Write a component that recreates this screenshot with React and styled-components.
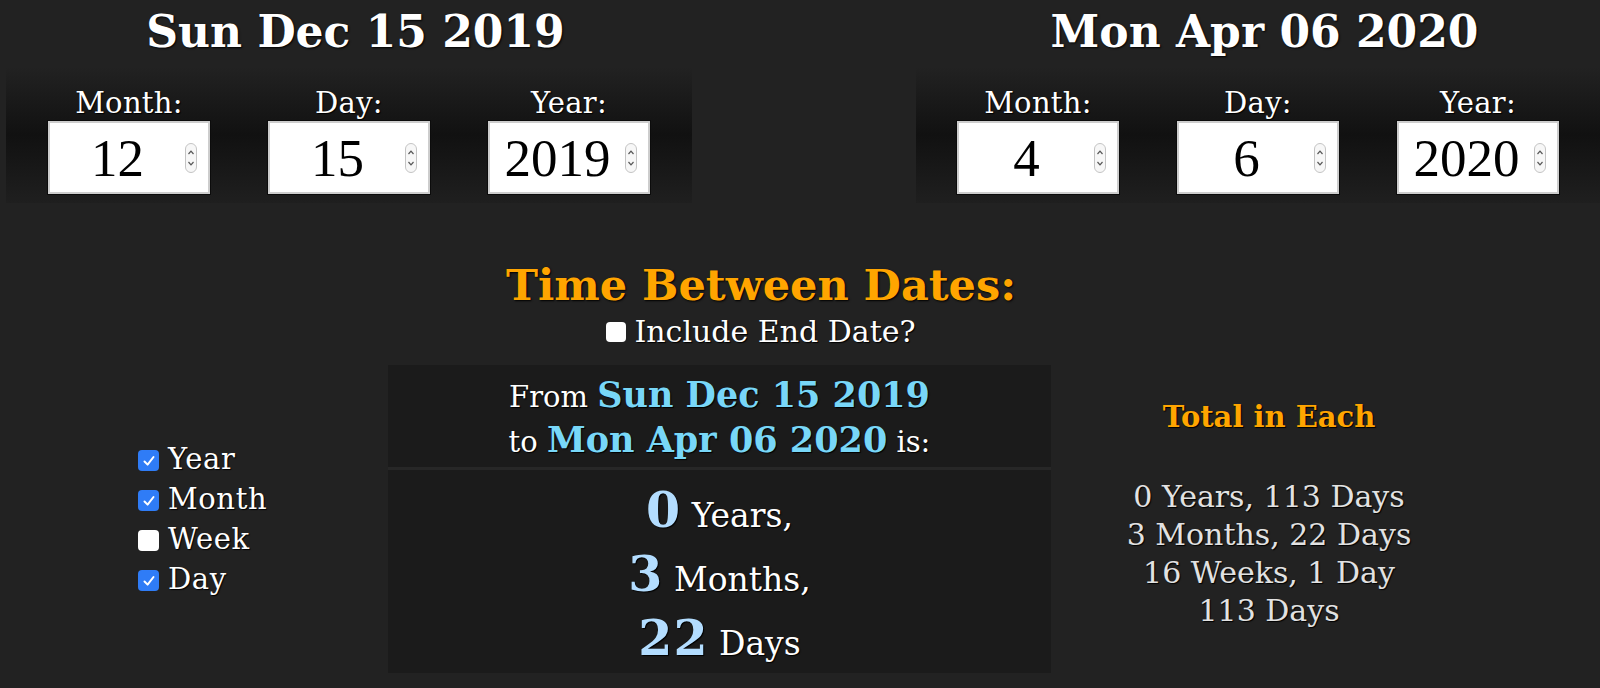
import React from 'react';
import styled, { createGlobalStyle } from 'styled-components';

const GlobalStyle = createGlobalStyle`
  html, body { margin: 0; padding: 0; background: #222; }
  body {
    font-family: "DejaVu Serif", "Liberation Serif", serif;
    color: #fff;
    width: 1600px;
    height: 688px;
    overflow: hidden;
  }
`;

const Page = styled.div`
  width: 1600px;
`;

const TopRow = styled.div`
  display: flex;
  justify-content: space-between;
  padding-left: 6px;
`;

const DateBlock = styled.section`
  width: ${(p) => p.$w}px;
  display: flex;
  flex-direction: column;
`;

const DateHeading = styled.h1`
  margin: 6px 0 9px;
  padding-left: 13px;
  font-size: 44px;
  line-height: 52px;
  font-weight: bold;
  text-align: center;
  text-shadow: 1px 1px 2px #000;
`;

const Panel = styled.div`
  height: 136px;
  box-sizing: border-box;
  padding-top: 21px;
  display: flex;
  justify-content: center;
  gap: 58px;
  background: linear-gradient(#222 0%, #111 50%, #1f1f1f 100%);
`;

const Field = styled.div`
  display: flex;
  flex-direction: column;
  align-items: center;
`;

const FieldLabel = styled.label`
  font-size: 29px;
  line-height: 30px;
  margin-bottom: 3px;
  letter-spacing: 0.3px;
  text-shadow: 1px 1px 1px #000;
`;

const NumberBox = styled.div`
  width: 162px;
  height: 73px;
  box-sizing: border-box;
  border: 2px solid #cdcdcd;
  box-shadow: 0 0 0 1px #0c0c0c;
  background: #fff;
  display: flex;
  align-items: center;
`;

const NumberInput = styled.input`
  flex: 1;
  min-width: 0;
  height: 100%;
  border: none;
  outline: none;
  background: transparent;
  padding: 0;
  font-family: "Liberation Serif", serif;
  font-size: 53px;
  color: #000;
  text-align: center;
`;

const SpinSvg = styled.svg`
  flex: none;
  margin-right: 11px;
`;

const Spinner = () => (
  <SpinSvg width="12" height="30" viewBox="0 0 12 30">
    <rect x="0.5" y="0.5" width="11" height="29" rx="5.5" fill="#f7f7f7" stroke="#c4c4c4" />
    <path d="M3.5 11 L6 8.2 L8.5 11" fill="none" stroke="#555" strokeWidth="1.2" />
    <path d="M3.5 19 L6 21.8 L8.5 19" fill="none" stroke="#555" strokeWidth="1.2" />
  </SpinSvg>
);

const NumberField = ({ label, value }) => (
  <Field>
    <FieldLabel>{label}</FieldLabel>
    <NumberBox>
      <NumberInput type="text" defaultValue={value} />
      <Spinner />
    </NumberBox>
  </Field>
);

const TitleBlock = styled.div`
  margin-top: 58px;
  padding-right: 78px;
  text-align: center;
`;

const Title = styled.h2`
  margin: 0;
  font-size: 43px;
  line-height: 48px;
  font-weight: bold;
  color: #ffa500;
  text-shadow: 1px 1px 2px #000;
`;

const IncludeRow = styled.label`
  margin-top: 6px;
  display: inline-flex;
  align-items: center;
  gap: 8px;
  font-size: 30px;
  line-height: 34px;
  text-shadow: 1px 1px 1px #000;
`;

const Box = styled.span`
  flex: none;
  width: ${(p) => p.$size}px;
  height: ${(p) => p.$size}px;
  box-sizing: border-box;
  border-radius: 4px;
  background: ${(p) => (p.$checked ? '#2f7cf6' : '#fff')};
  display: flex;
  align-items: center;
  justify-content: center;
  margin-top: ${(p) => p.$offset || 0}px;
`;

const Check = ({ checked, size = 21, offset }) => (
  <Box $checked={checked} $size={size} $offset={offset}>
    {checked && (
      <svg width={size - 7} height={size - 7} viewBox="0 0 14 14">
        <path d="M2.5 7.5 L5.6 10.6 L11.5 3" fill="none" stroke="#fff" strokeWidth="2" strokeLinecap="round" strokeLinejoin="round" />
      </svg>
    )}
  </Box>
);

const ResultsRow = styled.div`
  margin-top: 16px;
  display: grid;
  grid-template-columns: 388px 663px 1fr;
  align-items: center;
`;

const CheckList = styled.div`
  padding-left: 138px;
  display: flex;
  flex-direction: column;
`;

const CheckRow = styled.label`
  display: flex;
  align-items: center;
  gap: 9px;
  font-size: 29px;
  line-height: 40px;
  letter-spacing: 0.6px;
  text-shadow: 1px 1px 1px #000;
`;

const ResultBox = styled.div`
  display: flex;
  flex-direction: column;
  gap: 3px;
  background: #272727;
`;

const RangeSection = styled.div`
  background: #1b1b1b;
  height: 102px;
  box-sizing: border-box;
  padding-top: 10px;
  text-align: center;
  font-size: 29px;
  line-height: 45px;
  text-shadow: 1px 1px 1px #000;
`;

const DateHi = styled.span`
  font-size: 35px;
  line-height: 35px;
  font-weight: bold;
  color: #78d7f8;
`;

const DiffSection = styled.div`
  background: #1b1b1b;
  height: 203px;
  box-sizing: border-box;
  padding-top: 14px;
  text-align: center;
  font-size: 33px;
  line-height: 64px;
  text-shadow: 1px 1px 1px #000;
`;

const DiffLine = styled.div``;

const Num = styled.span`
  font-size: 49px;
  line-height: 48px;
  font-weight: bold;
  letter-spacing: 1px;
  color: #b3ddff;
`;

const TotalCol = styled.div`
  padding-right: 113px;
  padding-bottom: 11px;
  text-align: center;
`;

const TotalTitle = styled.h3`
  margin: 0 0 42px;
  font-size: 29px;
  line-height: 38px;
  font-weight: bold;
  color: #ffa500;
  text-shadow: 1px 1px 1px #000;
`;

const TotalLine = styled.div`
  font-size: 30px;
  line-height: 38px;
  color: #e2e2e2;
  text-shadow: 1px 1px 1px #000;
`;

const fields = (m, d, y) => [
  { label: 'Month:', value: m },
  { label: 'Day:', value: d },
  { label: 'Year:', value: y },
];

const dates = [
  { title: 'Sun Dec 15 2019', w: 686, fields: fields('12', '15', '2019') },
  { title: 'Mon Apr 06 2020', w: 684, fields: fields('4', '6', '2020') },
];

const units = [
  { name: 'Year', checked: true },
  { name: 'Month', checked: true },
  { name: 'Week', checked: false },
  { name: 'Day', checked: true },
];

const diffs = [
  { n: '0', unit: 'Years,' },
  { n: '3', unit: 'Months,' },
  { n: '22', unit: 'Days' },
];

const totals = ['0 Years, 113 Days', '3 Months, 22 Days', '16 Weeks, 1 Day', '113 Days'];

export default function App() {
  return (
    <Page>
      <GlobalStyle />
      <TopRow>
        {dates.map((d) => (
          <DateBlock key={d.title} $w={d.w}>
            <DateHeading>{d.title}</DateHeading>
            <Panel>
              {d.fields.map((f) => (
                <NumberField key={f.label} label={f.label} value={f.value} />
              ))}
            </Panel>
          </DateBlock>
        ))}
      </TopRow>

      <TitleBlock>
        <Title>Time Between Dates:</Title>
        <IncludeRow>
          <Check checked={false} size={20} />
          Include End Date?
        </IncludeRow>
      </TitleBlock>

      <ResultsRow>
        <CheckList>
          {units.map((u) => (
            <CheckRow key={u.name}>
              <Check checked={u.checked} offset={3} />
              {u.name}
            </CheckRow>
          ))}
        </CheckList>

        <ResultBox>
          <RangeSection>
            <div>
              From <DateHi>Sun Dec 15 2019</DateHi>
            </div>
            <div>
              to <DateHi>Mon Apr 06 2020</DateHi> is:
            </div>
          </RangeSection>
          <DiffSection>
            {diffs.map((d) => (
              <DiffLine key={d.unit}>
                <Num>{d.n}</Num> {d.unit}
              </DiffLine>
            ))}
          </DiffSection>
        </ResultBox>

        <TotalCol>
          <TotalTitle>Total in Each</TotalTitle>
          {totals.map((t) => (
            <TotalLine key={t}>{t}</TotalLine>
          ))}
        </TotalCol>
      </ResultsRow>
    </Page>
  );
}
